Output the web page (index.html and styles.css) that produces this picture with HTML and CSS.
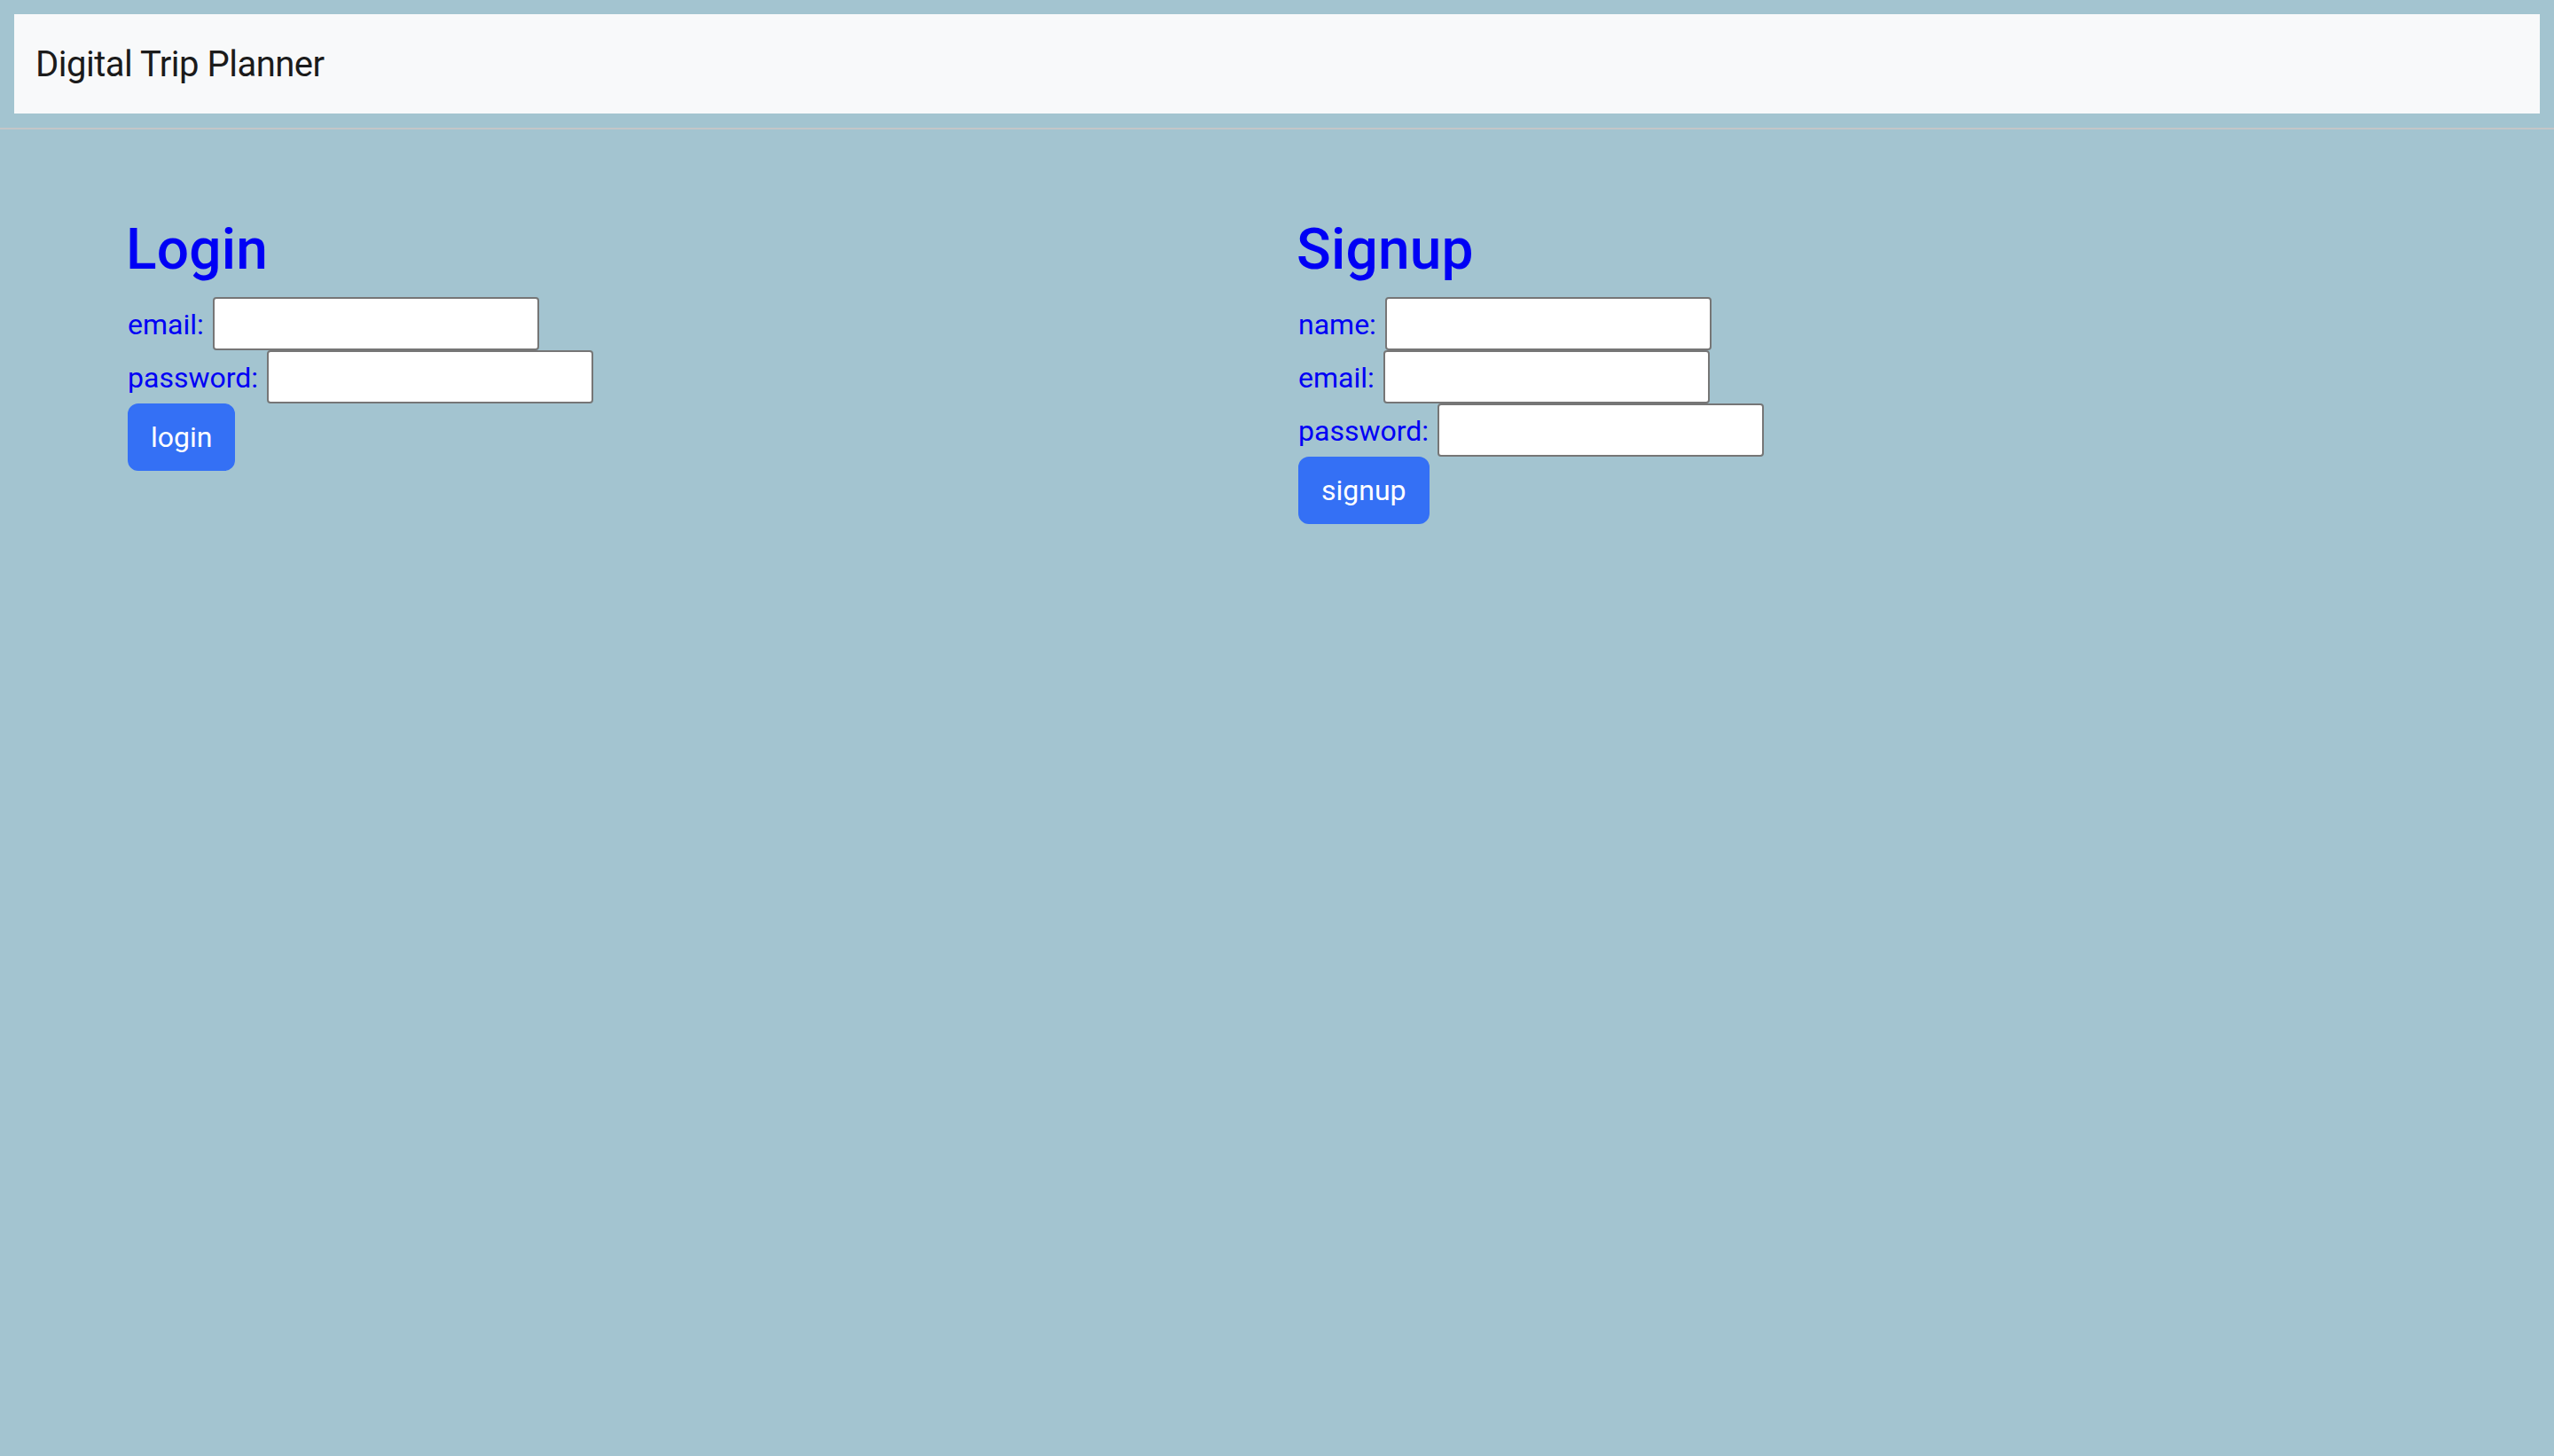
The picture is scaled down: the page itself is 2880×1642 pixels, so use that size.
FILE: index.html
```html
<!DOCTYPE html>
<html lang="en">
<head>
<meta charset="utf-8">
<title>Digital Trip Planner</title>
<link rel="stylesheet" href="styles.css">
</head>
<body>
  <header class="top">
    <nav class="navbar">
      <span class="brand">Digital Trip Planner</span>
    </nav>
  </header>
  <hr class="divider">
  <main class="container">
    <section class="col">
      <h2 class="title">Login</h2>
      <form class="form">
        <div class="row"><label class="label">email:</label><input class="field" type="text"></div>
        <div class="row"><label class="label">password:</label><input class="field" type="password"></div>
        <button class="btn" type="button">login</button>
      </form>
    </section>
    <section class="col">
      <h2 class="title">Signup</h2>
      <form class="form">
        <div class="row"><label class="label">name:</label><input class="field" type="text"></div>
        <div class="row"><label class="label">email:</label><input class="field" type="text"></div>
        <div class="row"><label class="label">password:</label><input class="field" type="password"></div>
        <button class="btn" type="button">signup</button>
      </form>
    </section>
  </main>
</body>
</html>
```
FILE: styles.css
```css
html {
  background: #a3c4d0;
}
body {
  margin: 0;
  min-height: 1642px;
  background: #a3c4d0;
  font-family: Roboto, "Liberation Sans", sans-serif;
}
.top {
  padding: 16px 16px 0;
}
.navbar {
  background: #f8f9fa;
  height: 112px;
  box-sizing: border-box;
  padding: 27px 24px 25px;
}
.brand {
  display: block;
  font-size: 40px;
  line-height: 60px;
  letter-spacing: -0.5px;
  color: #1b1b1b;
}
.divider {
  margin: 16px 0 0;
  border: 0;
  border-top: 2px solid #c4c6c8;
  height: 0;
}
.container {
  max-width: 2640px;
  margin: 0 auto;
  padding-top: 98px;
  display: grid;
  grid-template-columns: 1fr 1fr;
}
.col {
  padding: 0 24px;
}
.title {
  margin: 0 0 15px -2px;
  font-size: 64px;
  line-height: 76px;
  font-weight: 500;
  letter-spacing: 0.2px;
  color: #0000f5;
}
.form {
  margin: 0;
  display: flex;
  flex-direction: column;
  align-items: flex-start;
}
.row {
  display: flex;
  align-items: center;
  gap: 10px;
  height: 60px;
}
.label {
  padding-top: 2px;
  font-size: 32px;
  color: #0000f5;
}
.field {
  width: 368px;
  height: 60px;
  box-sizing: border-box;
  margin: 0;
  border: 2px solid #767676;
  border-radius: 4px;
  background: #fff;
  padding: 2px 4px;
}
.btn {
  margin: 0;
  padding: 12px 24px;
  border: 2px solid #3470f5;
  border-radius: 12px;
  background: #3470f5;
  color: #fff;
  font-family: Roboto, "Liberation Sans", sans-serif;
  font-size: 32px;
  line-height: 48px;
}
```
